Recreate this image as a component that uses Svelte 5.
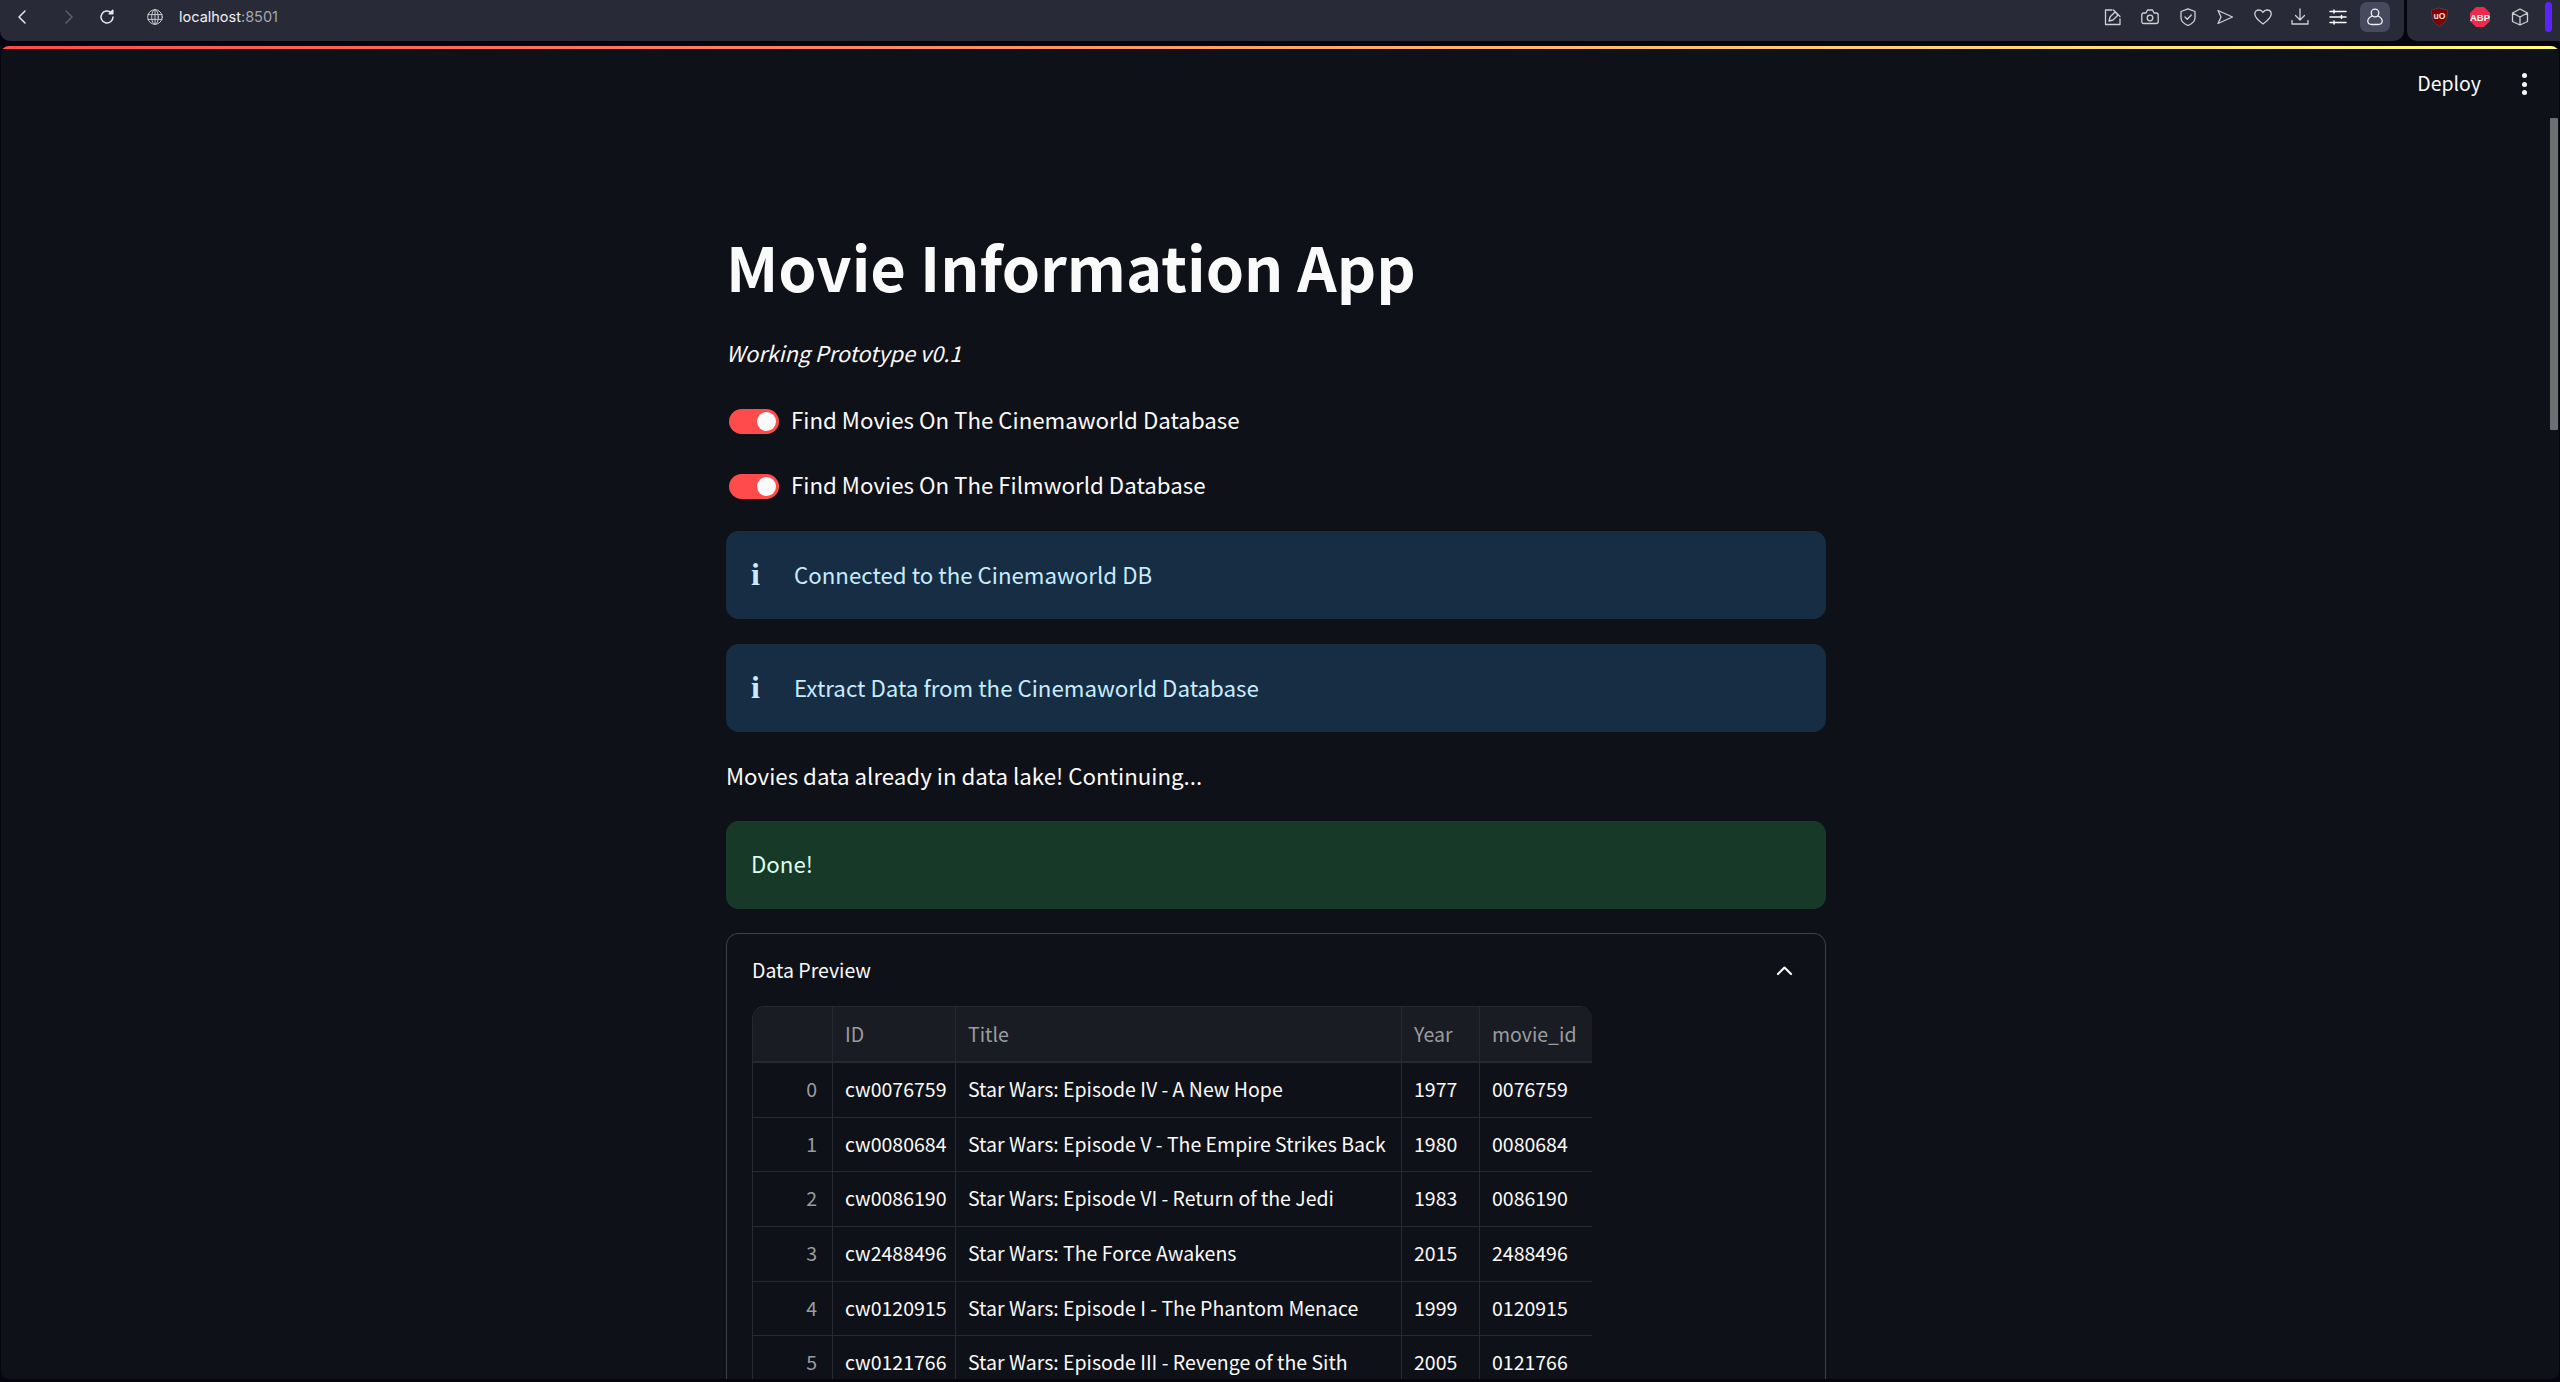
<script>
  const rows = [
    [0, 'cw0076759', 'Star Wars: Episode IV - A New Hope', '1977', '0076759'],
    [1, 'cw0080684', 'Star Wars: Episode V - The Empire Strikes Back', '1980', '0080684'],
    [2, 'cw0086190', 'Star Wars: Episode VI - Return of the Jedi', '1983', '0086190'],
    [3, 'cw2488496', 'Star Wars: The Force Awakens', '2015', '2488496'],
    [4, 'cw0120915', 'Star Wars: Episode I - The Phantom Menace', '1999', '0120915'],
    [5, 'cw0121766', 'Star Wars: Episode III - Revenge of the Sith', '2005', '0121766']
  ];
</script>

<div class="window">
  <header class="chrome">
    <div class="bar">
      <div class="nav">
        <svg class="i16 back" viewBox="0 0 16 16"><path d="M11 2 5 8l6 6" /></svg>
        <svg class="i16 dim" viewBox="0 0 16 16"><path d="m5 2 6 6-6 6" /></svg>
        <svg class="i16 reload" viewBox="0 0 16 16"><path d="M14 8A6 6 0 1 1 12.200 3.700" /><path d="M13.800 1.200v3.600h-3.600z" fill="#e8e8ec" /></svg>
      </div>
      <div class="url">
        <svg class="i16 globe" viewBox="0 0 16 16"><circle cx="8" cy="8" r="7.300" /><ellipse cx="8" cy="8" rx="3.300" ry="7.300" /><path d="M1 5.600h14M1 10.400h14M8 1v14" /></svg>
        <span class="host">localhost<span class="port">:8501</span></span>
      </div>
      <div class="tools">
        <svg class="t" viewBox="0 0 18 18"><path d="M8 2H1.500v14.500H16V11" /><path d="m5 13 1-4 5-5 3 3-5 5zM9.500 2 16 8.500" /></svg>
        <svg class="t" viewBox="0 0 18 18"><path d="M.8 7q0-2 2-2h2.200L6.500 2h5L13 5h2.200q2 0 2 2v6.500q0 2-2 2H2.800q-2 0-2-2z" /><circle cx="9" cy="10" r="2.800" /></svg>
        <svg class="t" viewBox="0 0 18 18"><path d="M9 .8 16 3.500v6.500q0 4.500-7 7.500-7-3-7-7.500V3.500z" /><path d="m6 9 2.300 2.300L12.300 7" /></svg>
        <svg class="t" viewBox="0 0 18 18"><path d="M2 2.500 16.500 9 2 15.500 5 9z" /></svg>
        <svg class="t" viewBox="0 0 18 18"><path d="M9 16C3 11.500 .8 9 .8 6 .8 3.500 2.800 2 5 2c1.700 0 3.100.9 4 2.400C9.900 2.900 11.300 2 13 2c2.200 0 4.200 1.500 4.200 4 0 3-2.200 5.500-8.200 10z" /></svg>
        <svg class="t" viewBox="0 0 18 18"><path d="M9 1v10.500M4.500 7.500 9 12l4.500-4.500" /><path d="M1 12.500v3.500h16v-3.500" /></svg>
        <svg class="t sliders" viewBox="0 0 18 18"><path d="M1 3.500h16M1 9h16M1 14.500h16M5 2v3M12.500 7.500v3M5 13v3" /></svg>
        <div class="profile">
          <svg class="t" viewBox="0 0 18 18"><circle cx="9" cy="5" r="3.800" /><path d="M6 8C3 9.500 1.500 11 1.800 13.500 2 15.500 4 16.500 6 16.500h6c2 0 4-1 4.200-3C16.500 11 15 9.500 12 8" /></svg>
        </div>
      </div>
    </div>
    <div class="ext">
      <svg class="e" viewBox="0 0 20 20"><path d="M10 .5 18.500 3c0 8.500-1.500 13-8.500 16.500C3 16 1.500 11.500 1.500 3z" fill="#800000" stroke="#4a4a55" stroke-width=".8" /><text x="10" y="12.500" class="ub">uO</text></svg>
      <svg class="e abp" viewBox="0 0 20 20"><path d="M6 0h8l6 6v8l-6 6H6l-6-6V6z" fill="#ed2a4b" stroke="none" /><text x="10" y="13.500" class="abpt">ABP</text></svg>
      <svg class="t" viewBox="0 0 18 18"><path d="M9 1 16.500 5v8.500L9 17 1.500 13.500V5zM1.500 5 9 9l7.500-4M9 9v8" /></svg>
      <span class="pill"></span>
    </div>
  </header>

  <div class="viewport">
    <div class="deco"></div>
    <div class="topbar">
      <span class="deploy">Deploy</span>
      <span class="kebab"><i></i><i></i><i></i></span>
    </div>

    <main class="content">
      <h1>Movie Information App</h1>
      <p class="sub"><em>Working Prototype v0.1</em></p>

      <label class="toggle first"><span class="track"><span class="knob"></span></span>Find Movies On The Cinemaworld Database</label>
      <label class="toggle second"><span class="track"><span class="knob"></span></span>Find Movies On The Filmworld Database</label>

      <div class="alert info"><span class="ico">i</span><span>Connected to the Cinemaworld DB</span></div>
      <div class="alert info second-info"><span class="ico">i</span><span>Extract Data from the Cinemaworld Database</span></div>

      <p class="msg">Movies data already in data lake! Continuing...</p>

      <div class="alert ok">Done!</div>

      <section class="expander">
        <div class="exp-head">
          <span>Data Preview</span>
          <svg class="chev" viewBox="0 0 16 16"><path d="m2.500 11 5.500-5.500 5.500 5.500" /></svg>
        </div>
        <div class="table">
          <div class="cell head c0"></div>
          <div class="cell head">ID</div>
          <div class="cell head">Title</div>
          <div class="cell head">Year</div>
          <div class="cell head">movie_id</div>
          {#each rows as r}
            <div class="cell idx c0">{r[0]}</div>
            <div class="cell body">{r[1]}</div>
            <div class="cell body">{r[2]}</div>
            <div class="cell body">{r[3]}</div>
            <div class="cell body">{r[4]}</div>
          {/each}
        </div>
      </section>
    </main>

    <div class="scrollthumb"></div>
  </div>
</div>

<style>
  :global(body) {
    margin: 0;
    background: #05050f;
  }
  .window {
    width: 2560px;
    height: 1382px;
    overflow: hidden;
    background: #05050f;
    font-family: "Noto Sans CJK SC", "Noto Sans", sans-serif;
    color: #fafafa;
    display: flex;
    flex-direction: column;
  }
  .chrome {
    height: 41px;
    flex: none;
    display: flex;
    gap: 3px;
  }
  .bar {
    flex: 1;
    background: #282a38;
    border-radius: 0 0 10px 10px;
    display: flex;
    align-items: center;
    padding-bottom: 7px;
    box-sizing: border-box;
  }
  .nav {
    display: flex;
    align-items: center;
    gap: 31px;
    padding-left: 14px;
  }
  svg {
    fill: none;
    stroke: #e8e8ec;
    stroke-width: 1.500;
    stroke-linejoin: round;
    stroke-linecap: round;
    display: block;
    flex: none;
  }
  .i16 { width: 16px; height: 16px; }
  .dim { stroke: #5c5e6b; }
  .reload { margin-left: -9px; }
  .url {
    display: flex;
    align-items: center;
    gap: 16px;
    margin-left: 32px;
  }
  .globe { stroke: #c8c9cf; stroke-width: 1; }
  .host {
    font: 14.500px/20px "Inter", sans-serif;
    color: #f0f0f4;
  }
  .port { color: #a4a6b0; }
  .tools {
    margin-left: auto;
    display: flex;
    align-items: center;
    gap: 19.500px;
    padding-right: 14px;
  }
  .t { width: 18px; height: 18px; stroke: #cfd0d6; stroke-width: 1.300; }
  .sliders { stroke: #fff; stroke-width: 1.500; }
  .profile {
    width: 30px;
    height: 30px;
    margin-left: -6px;
    background: #474a5e;
    border-radius: 7px;
    display: flex;
    align-items: center;
    justify-content: center;
  }
  .profile .t { stroke: #f0f0f4; }
  .ext {
    width: 153px;
    background: #282a38;
    border-radius: 0 0 0 10px;
    display: flex;
    align-items: center;
    padding: 0 0 7px 23px;
    box-sizing: border-box;
  }
  .e { width: 19px; height: 20px; stroke: none; }
  .abp { width: 20px; height: 20px; margin: 0 21px; }
  .ub { font: 700 9px "Liberation Sans", sans-serif; fill: #f0e0e0; stroke: none; text-anchor: middle; }
  .abpt { font: 700 9.500px "Liberation Sans", sans-serif; fill: #fff; stroke: none; text-anchor: middle; }
  .pill {
    width: 7px;
    height: 30px;
    margin-left: 16px;
    background: #5a22ff;
    border-radius: 4px;
  }

  .viewport {
    position: relative;
    flex: 1;
    margin: 5px 1px 3px 1px;
    background: #0e1117;
    border-radius: 8px;
    overflow: hidden;
  }
  .deco {
    height: 3px;
    background: linear-gradient(90deg, #ff4b4b, #fffd80);
  }
  .topbar {
    position: absolute;
    top: 3px;
    right: 0;
    height: 70px;
    display: flex;
    align-items: center;
  }
  .deploy {
    font-size: 19.500px;
    line-height: 30px;
    margin-right: 41px;
    padding-bottom: 2px;
  }
  .kebab {
    display: flex;
    flex-direction: column;
    gap: 3.500px;
    margin-right: 32px;
  }
  .kebab i {
    width: 5px;
    height: 5px;
    background: #fafafa;
    border-radius: 50%;
  }

  .content {
    width: 1100px;
    margin-left: 725px;
    font-size: 22.300px;
    line-height: 40px;
  }
  h1 {
    margin: 0;
    padding-top: 174px;
    font-size: 61.400px;
    line-height: 86px;
    font-weight: 700;
  }
  p { margin: 0; }
  .sub {
    margin-top: 26px;
    font-size: 21.700px;
    line-height: 36px;
    padding-bottom: 4px;
  }
  .toggle {
    display: flex;
    align-items: center;
    gap: 12px;
    padding-left: 3px;
    height: 40px;
  }
  .first { margin-top: 24px; }
  .second { margin-top: 25px; }
  .track {
    width: 50px;
    height: 25px;
    margin-top: 4px;
    background: #ff4b4b;
    border-radius: 13px;
    display: flex;
    align-items: center;
    justify-content: flex-end;
    padding-right: 3px;
    box-sizing: border-box;
  }
  .knob {
    width: 19px;
    height: 19px;
    background: #fafafa;
    border-radius: 50%;
  }
  .alert {
    height: 88px;
    border-radius: 12.500px;
    display: flex;
    align-items: center;
    box-sizing: border-box;
    padding-left: 25px;
  }
  .info {
    background: #172d43;
    color: #c7ebff;
    margin-top: 27px;
    padding-bottom: 3px;
  }
  .second-info { margin-top: 25px; }
  .ico {
    width: 43px;
    font-family: "Liberation Serif", serif;
    font-weight: 700;
    font-size: 32px;
  }
  .msg {
    margin-top: 25px;
    line-height: 36px;
    padding-bottom: 4px;
  }
  .ok {
    background: #173928;
    color: #dffde9;
    margin-top: 24px;
    padding-bottom: 5px;
  }
  .expander {
    margin-top: 24px;
    border: 1.500px solid #3e4146;
    border-bottom: none;
    border-radius: 12.500px 12.500px 0 0;
    padding: 0 25px;
    height: 600px;
  }
  .exp-head {
    height: 72px;
    display: flex;
    align-items: center;
    justify-content: space-between;
    font-size: 19.500px;
    line-height: 30px;
  }
  .chev {
    width: 19px;
    height: 19px;
    stroke: #fafafa;
    stroke-width: 1.800;
    margin-right: 6px;
  }
  .table {
    display: grid;
    grid-template-columns: 80px 123px 446px 78px 112px;
    grid-template-rows: 56px;
    grid-auto-rows: 54.700px;
    width: 839px;
    border-top: 1.500px solid #262932;
    border-left: 1.500px solid #262932;
    border-radius: 12.500px 12.500px 0 0;
    overflow: hidden;
    font-size: 19.500px;
    line-height: 30px;
  }
  .cell {
    display: flex;
    align-items: center;
    padding: 0 12px;
    white-space: nowrap;
    overflow: hidden;
    box-sizing: border-box;
    border-right: 1.500px solid #262932;
    border-bottom: 1.500px solid #262932;
    font-variant-numeric: tabular-nums;
  }
  .cell:nth-child(5n) { border-right: none; }
  .body { padding-bottom: 2px; }
  .head {
    background: #1a1c24;
    color: #9a9c9f;
    border-bottom-width: 2.500px;
  }
  .idx {
    color: #9a9c9f;
    justify-content: flex-end;
    padding-right: 15px;
    padding-bottom: 2px;
  }
  .scrollthumb {
    position: absolute;
    top: 72px;
    right: 1px;
    width: 8px;
    height: 312px;
    background: #6e6f72;
    border-radius: 1px;
  }
</style>
